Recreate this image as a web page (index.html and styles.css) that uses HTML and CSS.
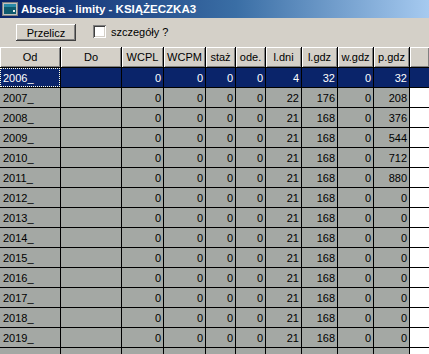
FILE: index.html
```html
<!DOCTYPE html>
<html lang="pl">
<head>
  <meta charset="UTF-8">
  <meta name="viewport" content="width=device-width, initial-scale=1.0">
  <title>Absecja - limity</title>
  <link rel="stylesheet" href="styles.css">
</head>
<body>
  <div class="window">
    <div class="titlebar">
      <svg class="app-icon" width="16" height="16" viewBox="0 0 16 16">
        <rect x="0.5" y="1.5" width="15" height="13" fill="#c0c0c0" stroke="#808080"/>
        <rect x="2" y="3" width="12" height="10" fill="#0e5a6e"/>
        <rect x="2" y="3" width="12" height="3" fill="#2a8aa8"/>
        <rect x="11" y="9" width="2" height="2" fill="#e8f0f0"/>
      </svg>
      <span class="title-text">Absecja - limity - KSIĄŻECZKA3</span>
    </div>

    <div class="toolbar">
      <button class="btn">Przelicz</button>
      <label class="check">
        <span class="check-box"></span>
        <span>szczegóły ?</span>
      </label>
    </div>

    <div class="grid">
      <div class="hd">Od</div><div class="hd">Do</div><div class="hd">WCPL</div><div class="hd">WCPM</div><div class="hd">staż</div><div class="hd">ode.</div><div class="hd">l.dni</div><div class="hd">l.gdz</div><div class="hd">w.gdz</div><div class="hd">p.gdz</div><div class="hd"></div>

      <div class="c sel txt focus">2006_</div><div class="c sel"></div><div class="c sel">0</div><div class="c sel">0</div><div class="c sel">0</div><div class="c sel">0</div><div class="c sel">4</div><div class="c sel">32</div><div class="c sel">0</div><div class="c sel">32</div><div class="c sel"></div>

      <div class="c txt">2007_</div><div class="c"></div><div class="c">0</div><div class="c">0</div><div class="c">0</div><div class="c">0</div><div class="c">22</div><div class="c">176</div><div class="c">0</div><div class="c">208</div><div class="c empty"></div>

      <div class="c txt">2008_</div><div class="c"></div><div class="c">0</div><div class="c">0</div><div class="c">0</div><div class="c">0</div><div class="c">21</div><div class="c">168</div><div class="c">0</div><div class="c">376</div><div class="c empty"></div>

      <div class="c txt">2009_</div><div class="c"></div><div class="c">0</div><div class="c">0</div><div class="c">0</div><div class="c">0</div><div class="c">21</div><div class="c">168</div><div class="c">0</div><div class="c">544</div><div class="c empty"></div>

      <div class="c txt">2010_</div><div class="c"></div><div class="c">0</div><div class="c">0</div><div class="c">0</div><div class="c">0</div><div class="c">21</div><div class="c">168</div><div class="c">0</div><div class="c">712</div><div class="c empty"></div>

      <div class="c txt">2011_</div><div class="c"></div><div class="c">0</div><div class="c">0</div><div class="c">0</div><div class="c">0</div><div class="c">21</div><div class="c">168</div><div class="c">0</div><div class="c">880</div><div class="c empty"></div>

      <div class="c txt">2012_</div><div class="c"></div><div class="c">0</div><div class="c">0</div><div class="c">0</div><div class="c">0</div><div class="c">21</div><div class="c">168</div><div class="c">0</div><div class="c">0</div><div class="c empty"></div>

      <div class="c txt">2013_</div><div class="c"></div><div class="c">0</div><div class="c">0</div><div class="c">0</div><div class="c">0</div><div class="c">21</div><div class="c">168</div><div class="c">0</div><div class="c">0</div><div class="c empty"></div>

      <div class="c txt">2014_</div><div class="c"></div><div class="c">0</div><div class="c">0</div><div class="c">0</div><div class="c">0</div><div class="c">21</div><div class="c">168</div><div class="c">0</div><div class="c">0</div><div class="c empty"></div>

      <div class="c txt">2015_</div><div class="c"></div><div class="c">0</div><div class="c">0</div><div class="c">0</div><div class="c">0</div><div class="c">21</div><div class="c">168</div><div class="c">0</div><div class="c">0</div><div class="c empty"></div>

      <div class="c txt">2016_</div><div class="c"></div><div class="c">0</div><div class="c">0</div><div class="c">0</div><div class="c">0</div><div class="c">21</div><div class="c">168</div><div class="c">0</div><div class="c">0</div><div class="c empty"></div>

      <div class="c txt">2017_</div><div class="c"></div><div class="c">0</div><div class="c">0</div><div class="c">0</div><div class="c">0</div><div class="c">21</div><div class="c">168</div><div class="c">0</div><div class="c">0</div><div class="c empty"></div>

      <div class="c txt">2018_</div><div class="c"></div><div class="c">0</div><div class="c">0</div><div class="c">0</div><div class="c">0</div><div class="c">21</div><div class="c">168</div><div class="c">0</div><div class="c">0</div><div class="c empty"></div>

      <div class="c txt">2019_</div><div class="c"></div><div class="c">0</div><div class="c">0</div><div class="c">0</div><div class="c">0</div><div class="c">21</div><div class="c">168</div><div class="c">0</div><div class="c">0</div><div class="c empty"></div>

      <div class="c txt"></div><div class="c"></div><div class="c"></div><div class="c"></div><div class="c"></div><div class="c"></div><div class="c"></div><div class="c"></div><div class="c"></div><div class="c"></div><div class="c empty"></div>
    </div>
  </div>
</body>
</html>
```

FILE: styles.css
```css
body {
  margin: 0;
  font-family: "Liberation Sans", Arial, sans-serif;
  font-size: 11px;
  background-color: #d4d0c8;
  overflow: hidden;
}
.window {
  width: 429px;
  height: 354px;
  overflow: hidden;
}
.titlebar {
  height: 18px;
  display: flex;
  align-items: center;
  gap: 3px;
  padding-left: 2px;
  background: linear-gradient(to right, #0a246a, #3a6ea5 55%, #a6caf0);
}
.app-icon {
  flex: none;
}
.title-text {
  color: #fff;
  font-weight: bold;
  font-size: 11.5px;
  white-space: nowrap;
}
.toolbar {
  height: 29px;
  display: flex;
  align-items: center;
  padding-left: 16px;
  background-color: #d4d0c8;
}
.btn {
  width: 60px;
  height: 17px;
  padding: 0;
  font: inherit;
  color: #000;
  background-color: #d4d0c8;
  border: none;
  box-shadow: inset -1px -1px #404040, inset 1px 1px #fff, inset -2px -2px #808080;
}
.check {
  display: flex;
  align-items: center;
  gap: 5px;
  margin-left: 17px;
  margin-top: -2px;
}
.check-box {
  width: 13px;
  height: 13px;
  box-sizing: border-box;
  background-color: #fff;
  box-shadow: inset 1px 1px #808080, inset -1px -1px #fff, inset 2px 2px #404040, inset -2px -2px #d4d0c8;
}
.grid {
  display: grid;
  grid-template-columns: 60px 60px 41px 41px 29px 29px 35px 35px 35px 35px 1fr;
  grid-template-rows: 20px;
  grid-auto-rows: 19px;
  gap: 1px;
  background-color: #000;
}
.hd {
  display: flex;
  align-items: center;
  justify-content: center;
  background-color: #d4d0c8;
  box-shadow: inset 1px 1px #fff, inset -1px -1px #808080;
}
.c {
  display: flex;
  align-items: center;
  justify-content: flex-end;
  padding-right: 2px;
  background-color: #a4a8a4;
  color: #000;
}
.c.txt {
  justify-content: flex-start;
  padding-left: 3px;
}
.c.sel {
  background-color: #0a246a;
  color: #fff;
}
.c.empty {
  background-color: #fff;
}
.focus {
  outline: 1px dotted #ffffe0;
  outline-offset: -1px;
}
```
